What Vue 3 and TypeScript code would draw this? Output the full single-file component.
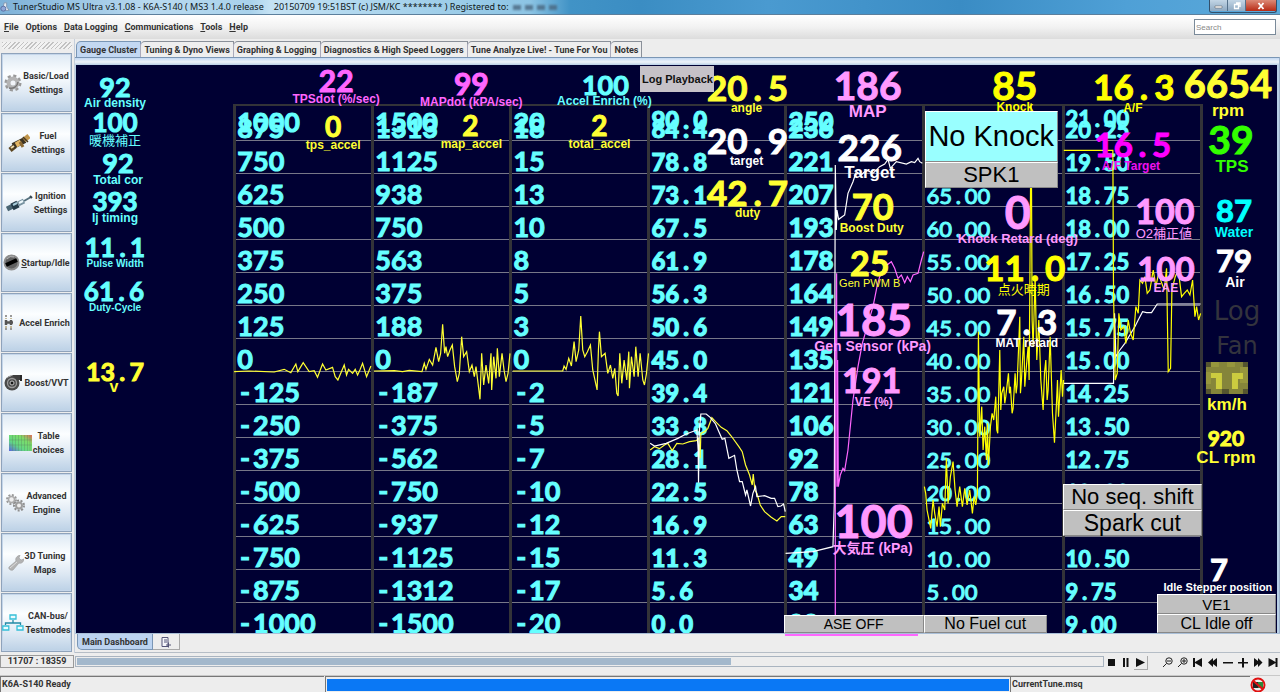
<script setup lang="ts">
import { ref } from 'vue'

interface Gauge {
  text: string
  x: number
  y: number
  size: number
  color: string
}
interface Indicator {
  text: string
  x: number
  y: number
  w: number
  h: number
  size: number
  on?: boolean
}
interface Chart {
  name: string
  kind: string
  labels: string[]
}
interface Trace {
  color: string
  x: number
  y: number
  points: string
}

/* The dashboard is designed on a 1200 x 568 canvas whose origin is (77, 65). */
const originX = 77
const originY = 65
const canvasW = 1200
const canvasH = 568
const pctX = (v: number) => ((v - originX) / canvasW) * 100 + '%'
const pctY = (v: number) => ((v - originY) / canvasH) * 100 + '%'
const place = (g: Gauge) => ({
  left: pctX(g.x),
  top: pctY(g.y),
  fontSize: g.size + 'px',
  color: g.color,
})
const placeBox = (b: Indicator) => ({
  left: pctX(b.x),
  top: pctY(b.y),
  width: (b.w / canvasW) * 100 + '%',
  height: (b.h / canvasH) * 100 + '%',
  fontSize: b.size + 'px',
})
/* Points and minus signs take a full digit cell, so they are split out. */
const parts = (s: string) => s.split(/([.-])/).filter((p) => p.length > 0)
const isMark = (p: string) => p === '.' || p === '-'

const menus = [
  { key: 'F', pre: '', rest: 'ile' },
  { key: 't', pre: 'Op', rest: 'ions' },
  { key: 'D', pre: '', rest: 'ata Logging' },
  { key: 'C', pre: '', rest: 'ommunications' },
  { key: 'T', pre: '', rest: 'ools' },
  { key: 'H', pre: '', rest: 'elp' },
]
const tabs = [
  'Gauge Cluster',
  'Tuning & Dyno Views',
  'Graphing & Logging',
  'Diagnostics & High Speed Loggers',
  'Tune Analyze Live! - Tune For You',
  'Notes',
]
const activeTab = ref(0)
const search = ref('')
const position = ref(11707)
const total = 18359

const sideItems = [
  { icon: 'gear', lines: ['Basic/Load', 'Settings'] },
  { icon: 'injector', lines: ['Fuel', 'Settings'] },
  { icon: 'plug', lines: ['Ignition', 'Settings'] },
  { icon: 'throttle', lines: ['Startup/Idle'], mnemonic: true },
  { icon: 'accel', lines: ['Accel Enrich'] },
  { icon: 'turbo', lines: ['Boost/VVT'] },
  { icon: 'table', lines: ['Table', 'choices'] },
  { icon: 'gears', lines: ['Advanced', 'Engine'] },
  { icon: 'wrench', lines: ['3D Tuning', 'Maps'] },
  { icon: 'network', lines: ['CAN-bus/', 'Testmodes'] },
]

const charts: Chart[] = [
  { name: 'tps', kind: 'wide', labels: ['1000', '875', '750', '625', '500', '375', '250', '125', '0', '-125', '-250', '-375', '-500', '-625', '-750', '-875', '-1000'] },
  { name: 'map', kind: 'wide', labels: ['1500', '1313', '1125', '938', '750', '563', '375', '188', '0', '-187', '-375', '-562', '-750', '-937', '-1125', '-1312', '-1500'] },
  { name: 'total', kind: 'wide', labels: ['20', '18', '15', '13', '10', '8', '5', '3', '0', '-2', '-5', '-7', '-10', '-12', '-15', '-17', '-20'] },
  { name: 'angle', kind: 'heavy', labels: ['90.0', '84.4', '78.8', '73.1', '67.5', '61.9', '56.3', '50.6', '45.0', '39.4', '33.8', '28.1', '22.5', '16.9', '11.3', '5.6', '0.0'] },
  { name: 'boost', kind: 'heavy large', labels: ['250', '236', '221', '207', '193', '178', '164', '149', '135', '121', '106', '92', '78', '63', '49', '34', '20'] },
  { name: 'knock', kind: 'light', labels: ['80.00', '75.00', '70.00', '65.00', '60.00', '55.00', '50.00', '45.00', '40.00', '35.00', '30.00', '25.00', '20.00', '15.00', '10.00', '5.00', '0.00'] },
  { name: 'afr', kind: 'narrow', labels: ['21.00', '20.25', '19.50', '18.75', '18.00', '17.25', '16.50', '15.75', '15.00', '14.25', '13.50', '12.75', '12.00', '11.25', '10.50', '9.75', '9.00'] },
]

const cyan = '#66ffff'
const yellow = '#ffff33'
const magenta = '#ff66ff'
const pink = '#ff99ff'
const white = '#ffffff'

const values: Gauge[] = [
  { text: '92', x: 116, y: 86, size: 27, color: cyan },
  { text: '100', x: 116, y: 122, size: 26, color: cyan },
  { text: '92', x: 119, y: 162, size: 27, color: cyan },
  { text: '393', x: 116, y: 201, size: 26, color: cyan },
  { text: '11.1', x: 116, y: 247, size: 26, color: cyan },
  { text: '61.6', x: 115, y: 291, size: 26, color: cyan },
  { text: '13.7', x: 116, y: 371, size: 25, color: yellow },
  { text: '22', x: 337, y: 80, size: 30, color: magenta },
  { text: '99', x: 472, y: 83, size: 30, color: magenta },
  { text: '100', x: 606, y: 84, size: 27, color: cyan },
  { text: '0', x: 334, y: 126, size: 28, color: yellow },
  { text: '2', x: 471, y: 125, size: 28, color: yellow },
  { text: '2', x: 600, y: 125, size: 28, color: yellow },
  { text: '20.5', x: 748, y: 87, size: 35, color: yellow },
  { text: '20.9', x: 748, y: 140, size: 35, color: white },
  { text: '42.7', x: 748, y: 192, size: 35, color: yellow },
  { text: '186', x: 868, y: 85, size: 39, color: pink },
  { text: '226', x: 870, y: 146, size: 37, color: white },
  { text: '70', x: 873, y: 206, size: 36, color: yellow },
  { text: '25', x: 870, y: 263, size: 34, color: yellow },
  { text: '185', x: 874, y: 319, size: 44, color: pink },
  { text: '191', x: 872, y: 380, size: 34, color: pink },
  { text: '100', x: 874, y: 521, size: 45, color: pink },
  { text: '85', x: 1015, y: 85, size: 39, color: '#ffff00' },
  { text: '0', x: 1018, y: 212, size: 45, color: pink },
  { text: '11.0', x: 1025, y: 267, size: 35, color: '#ffff00' },
  { text: '7.3', x: 1027, y: 321, size: 35, color: white },
  { text: '16.3', x: 1134, y: 86, size: 35, color: '#ffff00' },
  { text: '6654', x: 1228, y: 83, size: 38, color: yellow },
  { text: '16.5', x: 1133, y: 144, size: 33, color: '#ff00ff' },
  { text: '39', x: 1231, y: 139, size: 39, color: '#33ff00' },
  { text: '87', x: 1234, y: 210, size: 31, color: '#00ffff' },
  { text: '79', x: 1234, y: 260, size: 31, color: white },
  { text: '100', x: 1165, y: 211, size: 34, color: pink },
  { text: '100', x: 1166, y: 268, size: 33, color: pink },
  { text: '920', x: 1226, y: 437, size: 21, color: yellow },
  { text: '7', x: 1219, y: 569, size: 31, color: white },
]
const captions: Gauge[] = [
  { text: 'Air density', x: 116, y: 103, size: 12, color: cyan },
  { text: 'Total cor', x: 119, y: 180, size: 12, color: cyan },
  { text: 'Ij timing', x: 116, y: 218, size: 12, color: cyan },
  { text: 'Pulse Width', x: 116, y: 264, size: 10, color: cyan },
  { text: 'Duty-Cycle', x: 116, y: 308, size: 10, color: cyan },
  { text: 'v', x: 115, y: 387, size: 16, color: yellow },
  { text: 'TPSdot (%/sec)', x: 337, y: 99, size: 12, color: magenta },
  { text: 'MAPdot (kPA/sec)', x: 472, y: 102, size: 12, color: magenta },
  { text: 'Accel Enrich (%)', x: 605, y: 101, size: 12, color: cyan },
  { text: 'tps_accel', x: 334, y: 145, size: 12, color: yellow },
  { text: 'map_accel', x: 472, y: 144, size: 12, color: yellow },
  { text: 'total_accel', x: 600, y: 144, size: 12, color: yellow },
  { text: 'angle', x: 747, y: 108, size: 12, color: yellow },
  { text: 'target', x: 747, y: 161, size: 12, color: white },
  { text: 'duty', x: 748, y: 213, size: 12, color: yellow },
  { text: 'MAP', x: 868, y: 111, size: 17, color: pink },
  { text: 'Target', x: 870, y: 172, size: 17, color: white },
  { text: 'Boost Duty', x: 872, y: 228, size: 12, color: yellow },
  { text: 'Gen Sensor (kPa)', x: 873, y: 346, size: 14, color: pink },
  { text: 'VE (%)', x: 874, y: 402, size: 12, color: pink },
  { text: '大気圧 (kPa)', x: 873, y: 548, size: 14, color: pink },
  { text: 'Knock', x: 1015, y: 107, size: 12, color: '#ffff00' },
  { text: 'Knock Retard (deg)', x: 1018, y: 238, size: 13, color: pink },
  { text: 'MAT retard', x: 1027, y: 343, size: 12, color: white },
  { text: 'A/F', x: 1133, y: 108, size: 12, color: '#ffff00' },
  { text: 'rpm', x: 1228, y: 110, size: 17, color: yellow },
  { text: 'A/F Target', x: 1131, y: 166, size: 12, color: '#ee11ee' },
  { text: 'TPS', x: 1232, y: 166, size: 17, color: '#33ff00' },
  { text: 'Water', x: 1234, y: 232, size: 14, color: '#00ffff' },
  { text: 'Air', x: 1235, y: 282, size: 14, color: white },
  { text: 'EAE', x: 1166, y: 288, size: 12, color: pink },
  { text: 'km/h', x: 1227, y: 404, size: 17, color: yellow },
  { text: 'CL rpm', x: 1226, y: 457, size: 17, color: yellow },
  { text: 'Idle Stepper position', x: 1218, y: 587, size: 11, color: white },
]
const plainCaptions: Gauge[] = [
  { text: '暖機補正', x: 116, y: 140, size: 13, color: cyan },
  { text: 'Gen PWM B', x: 870, y: 283, size: 11, color: yellow },
  { text: '点火時期', x: 1024, y: 289, size: 13, color: '#ffff00' },
  { text: 'O2補正値', x: 1164, y: 233, size: 13, color: pink },
]
const dimmed: Gauge[] = [
  { text: 'Log', x: 1237, y: 311, size: 26, color: '#33333d' },
  { text: 'Fan', x: 1237, y: 346, size: 24, color: '#33333d' },
]
const indicators: Indicator[] = [
  { text: 'No Knock', x: 925, y: 111, w: 133, h: 51, size: 29, on: true },
  { text: 'SPK1', x: 925, y: 162, w: 133, h: 26, size: 22 },
  { text: 'No seq. shift', x: 1063, y: 484, w: 139, h: 26, size: 22 },
  { text: 'Spark cut', x: 1063, y: 510, w: 139, h: 26, size: 23 },
  { text: 'ASE OFF', x: 784, y: 615, w: 140, h: 18, size: 14 },
  { text: 'No Fuel cut', x: 924, y: 615, w: 123, h: 18, size: 16 },
  { text: 'VE1', x: 1157, y: 594, w: 119, h: 20, size: 15 },
  { text: 'CL Idle off', x: 1157, y: 614, w: 119, h: 19, size: 16 },
]

/* Trace points are stored at three units per canvas pixel. */
const traces: Trace[] = [
  { color: '#ffff33', x: 230, y: 90, points: '15,845 60,843 135,846 165,838 185,848 200,822 206,845 222,818 240,845 255,842 265,862 280,822 290,840 310,832 318,860 326,870 345,825 352,855 358,838 370,850 378,838 385,855 392,840 400,820 412,860 425,828' },
  { color: '#ffff33', x: 230, y: 90, points: '434,843 495,842 520,845 540,841 578,845 585,820 590,838 600,808 610,825 620,772 628,815 634,790 640,703 646,790 650,770 655,800 662,780 669,765 676,830 684,875 690,850 697,740 703,800 712,785 720,845 728,825 735,860 740,830 748,895 752,928 757,790 763,885 770,825 778,880 785,790 787,900 793,800 800,865 804,775 810,860 818,790 824,840 830,875 836,850 842,790' },
  { color: '#ffff33', x: 230, y: 90, points: '850,843 1000,843 1004,828 1010,838 1018,805 1026,828 1034,755 1040,815 1048,780 1054,678 1060,780 1066,800 1074,785 1083,765 1090,840 1103,900 1107,780 1110,725 1116,800 1127,790 1135,850 1143,825 1150,865 1156,835 1162,910 1166,918 1171,790 1177,880 1184,810 1192,870 1198,785 1200,895 1206,800 1214,860 1219,770 1226,860 1232,790 1240,870 1245,885 1251,850 1257,790' },
  { color: '#ffff33', x: 640, y: 350, points: '32,300 45,290 60,296 75,285 85,280 98,302 112,280 130,282 150,275 170,272 178,265 182,325 184,250 195,245 205,235 217,203 228,215 245,232 262,242 275,258 298,290 308,305 318,345 330,375 338,405 341,372 346,420 352,430 362,465 375,485 395,502 412,513 425,500 437,500' },
  { color: '#ffffff', x: 640, y: 350, points: '32,280 45,288 80,280 115,265 140,252 172,240 176,300 177,398 179,250 184,192 200,192 212,202 228,222 240,250 248,268 256,265 268,325 285,316 292,360 300,395 308,395 318,435 322,420 333,468 340,430 348,410 352,440 375,437 395,445 405,445 415,470 424,468 432,462 437,485' },
  { color: '#ffffff', x: 640, y: 60, points: '438,1480 520,1475 580,1460 584,1330 587,315 590,510 592,450 597,478 615,465 625,400 640,365 650,335 665,345 680,330 700,340 720,320 735,312 745,298 752,325 770,305 800,312 815,305 825,308 835,295 840,305 848,310' },
  { color: '#ff66ff', x: 640, y: 60, points: '587,1665 587,870 591,640 592,1280 594,900 596,1280 602,1245 610,1225 615,1232 625,1170 640,1020 655,920 668,850 700,740 712,680 720,650 735,620 755,605 765,625 775,655 785,645 795,668 803,650 812,665 820,645 835,640 845,600 852,575' },
  { color: '#ffff00', x: 920, y: 60, points: '14,1280 18,1300 22,1350 33,1405 40,1320 45,1360 52,1400 58,1340 62,1400 68,1330 75,1350 80,1195 85,1330 92,1250 100,1205 106,1290 112,1340 120,1280 128,1340 135,1285 142,1335 150,1290 158,1360 163,1310 168,1335 173,1300 176,815 180,1130 186,1040 190,1170 195,1100 200,1200 203,1090 206,1215 212,1100 217,1060 222,1080 228,1010 231,1110 234,1120 240,870 243,1050 246,1000 252,980 255,1030 258,1010 266,940 269,1000 272,980 277,1060 280,1045 286,940 289,1000 292,975 300,770 302,1000 305,960 312,830 315,980 318,940 325,860 328,960 330,700 334,130 337,780 340,860 346,650 351,900 357,780 363,960 370,1050 374,940 378,900 382,1020 385,990 391,830 398,1060 404,1148 410,1030 413,960 416,1070 424,930 428,1010 431,960' },
  { color: '#ffffff', x: 920, y: 60, points: '432,970 581,970 584,760 588,890 600,870 615,850 630,825 645,800 655,780 668,755 680,758 695,758 712,732 842,732' },
  { color: '#ffff00', x: 920, y: 60, points: '432,271 579,271 581,700 586,960 592,940 597,760 603,810 612,800 618,850 625,780 632,820 640,840 648,740 655,760 660,660 668,670 675,650 682,700 690,690 700,630 708,680 716,640 724,665 733,690 740,625 745,935 752,925 756,690 766,650 775,630 785,710 793,700 802,690 810,705 818,660 825,770 830,740 836,780 842,760' },
]
</script>

<template>
  <div class="window">
    <header class="titlebar">
      <svg class="app-icon" viewBox="0 0 12 12" aria-hidden="true">
        <path d="M5 1h3v5l3 4H3z" fill="#e8eef5" stroke="#7d8ea6" />
        <circle cx="4" cy="8" r="3" fill="#8fa7d8" stroke="#56679a" />
      </svg>
      <span class="title">TunerStudio MS Ultra v3.1.08 - K6A-S140 ( MS3 1.4.0 release</span>
      <span class="title build">20150709 19:51BST (c) JSM/KC ******** ) Registered to:</span>
      <span class="redacted" aria-hidden="true"><i></i><i></i><i></i><i></i></span>
      <div class="win-buttons">
        <button type="button" aria-label="Minimize"><svg viewBox="0 0 12 10"><path d="M2 5h7v2H2z" fill="#fff" stroke="#555" stroke-width=".5" /></svg></button>
        <button type="button" aria-label="Restore"><svg viewBox="0 0 12 10"><path d="M3.500 3.500h4v4h-4zM5 2h4v4" fill="none" stroke="#fff" stroke-width="1.300" /></svg></button>
        <button type="button" class="close" aria-label="Close"><svg viewBox="0 0 12 10"><path d="M3.500 2l5 6M8.500 2l-5 6" stroke="#fff" stroke-width="1.800" /></svg></button>
      </div>
    </header>

    <nav class="menubar">
      <button v-for="m in menus" :key="m.key" type="button">{{ m.pre }}<u>{{ m.key }}</u>{{ m.rest }}</button>
      <input v-model="search" class="search" type="text" placeholder="Search" aria-label="Search" />
    </nav>

    <div class="body">
      <aside class="sidebar">
        <div class="grip"></div>
        <button v-for="item in sideItems" :key="item.icon" type="button" class="side-btn">
          <svg v-if="item.icon === 'gear'" class="ico" width="18" height="18" viewBox="0 0 18 18">
            <circle cx="9" cy="9" r="7" fill="none" stroke="#999" stroke-width="3" stroke-dasharray="3 2.500" />
            <circle cx="9" cy="9" r="4.500" fill="none" stroke="#b4b4b4" stroke-width="4" />
            <path d="M5 14a7 7 0 0 0 9-6" fill="none" stroke="#777" stroke-width="1.500" />
            <circle cx="9" cy="9" r="2" fill="#f3f5f8" />
          </svg>
          <svg v-else-if="item.icon === 'injector'" class="ico" width="22" height="18" viewBox="0 0 22 18">
            <path d="M2 16l5-4" stroke="#5b4520" stroke-width="5" />
            <path d="M5 12l12-6" stroke="#3d3423" stroke-width="6" />
            <path d="M8 11l5-3" stroke="#e2b565" stroke-width="5" />
            <path d="M12 8l3 5" stroke="#8b6a34" stroke-width="3" />
            <path d="M16 6l5-4" stroke="#c0954b" stroke-width="5" />
            <path d="M15 3l5 5" stroke="#443822" stroke-width="1.500" />
            <path d="M3 14l3-2" stroke="#f0dcae" stroke-width="2" />
          </svg>
          <svg v-else-if="item.icon === 'plug'" class="ico" width="27" height="18" viewBox="0 0 27 18">
            <path d="M1 15l6-3" stroke="#4b6573" stroke-width="5" />
            <path d="M6 13l6-3" stroke="#243b49" stroke-width="7" />
            <path d="M7 11l4-2" stroke="#a8ccda" stroke-width="2" />
            <path d="M12 10l6-3" stroke="#7893a1" stroke-width="5" />
            <path d="M13 9l4-2" stroke="#eef8fc" stroke-width="2" />
            <path d="M18 7l7-4" stroke="#55707e" stroke-width="2" />
            <path d="M24 2l2 2" stroke="#35454f" stroke-width="2" />
          </svg>
          <svg v-else-if="item.icon === 'throttle'" class="ico" width="17" height="17" viewBox="0 0 17 17">
            <circle cx="8.500" cy="8.500" r="7" fill="#606060" stroke="#8d8d8d" stroke-width="2" />
            <path d="M3 11l11-5" stroke="#000" stroke-width="4" />
            <path d="M4 5a6 6 0 0 1 7-2" stroke="#b8b8b8" fill="none" />
          </svg>
          <svg v-else-if="item.icon === 'accel'" class="ico accel" width="12" height="16" viewBox="0 0 12 16">
            <path d="M2 1h2M7 1h2M2 14h2M7 14h2" stroke="#999" stroke-width="2" />
            <path d="M3 5v5M8 5v5M2 7.500h8" stroke="#555" stroke-width="2.500" />
            <path d="M3 11v2M8 11v2M3 3v1M8 3v1" stroke="#b7a67a" stroke-width="1.500" />
          </svg>
          <svg v-else-if="item.icon === 'turbo'" class="ico" width="19" height="18" viewBox="0 0 19 18">
            <circle cx="8" cy="9" r="7.500" fill="#4b4b4b" />
            <path d="M8 1h10v5h-5z" fill="#3f3f3f" />
            <path d="M16 1h2v6h-2z" fill="#2a2a2a" />
            <circle cx="8" cy="9" r="4.500" fill="none" stroke="#999" stroke-width="1.300" />
            <circle cx="8" cy="9" r="2" fill="#151515" stroke="#c4c4c4" />
            <path d="M3 4a7 7 0 0 1 4-2" stroke="#a5a5a5" fill="none" />
          </svg>
          <svg v-else-if="item.icon === 'table'" class="ico" width="23" height="16" viewBox="0 0 23 16">
            <defs>
              <linearGradient id="heat" x1="0" y1="1" x2="1" y2="0">
                <stop offset="0" stop-color="#5a64e0" />
                <stop offset=".35" stop-color="#62d884" />
                <stop offset=".7" stop-color="#7ddc68" />
                <stop offset="1" stop-color="#e86a5a" />
              </linearGradient>
            </defs>
            <path d="M0 0h23v16H0z" fill="url(#heat)" />
            <path d="M3.500 0v16M6.500 0v16M9.500 0v16M12.500 0v16M15.500 0v16M18.500 0v16M21 0v16M0 5h23M0 10h23" stroke="#5b8a62" stroke-opacity=".45" stroke-width=".8" />
          </svg>
          <svg v-else-if="item.icon === 'gears'" class="ico" width="19" height="18" viewBox="0 0 19 18">
            <circle cx="5.500" cy="5.500" r="4.500" fill="none" stroke="#999" stroke-width="2" stroke-dasharray="2 1.500" />
            <circle cx="5.500" cy="5.500" r="3" fill="#eee" stroke="#aaa" stroke-width="1.500" />
            <circle cx="13" cy="11.500" r="5" fill="none" stroke="#8e8e8e" stroke-width="2" stroke-dasharray="2 1.500" />
            <circle cx="13" cy="11.500" r="3" fill="#eee" stroke="#9e9e9e" stroke-width="2" />
          </svg>
          <svg v-else-if="item.icon === 'wrench'" class="ico" width="16" height="16" viewBox="0 0 16 16">
            <path d="M1 12l7-6c-1-3 1-5 4-6l-1 3 2 2 3-1c0 3-3 5-5 4l-6 7c-2 1-5-1-4-3z" fill="#b3b3b3" stroke="#9a9a9a" stroke-width=".6" />
            <path d="M2 13l7-6" stroke="#ddd" />
          </svg>
          <svg v-else class="ico" width="22" height="18" viewBox="0 0 22 18">
            <path d="M11 6v3M3.500 11V9h15v2" fill="none" stroke="#238aa6" stroke-width="1.300" />
            <path d="M8 1h6v4H8zM.8 12h6v4h-6zM15 12h6v4h-6z" fill="#eafcff" stroke="#35bfd8" stroke-width="1.300" />
          </svg>
          <span class="side-text">
            <span v-for="(line, i) in item.lines" :key="line">
              <template v-if="item.mnemonic && i === 0"><u>{{ line.charAt(0) }}</u>{{ line.slice(1) }}</template>
              <template v-else>{{ line }}</template>
            </span>
          </span>
        </button>
      </aside>

      <main class="content">
        <div class="tabs" role="tablist">
          <button
            v-for="(t, i) in tabs"
            :key="t"
            type="button"
            role="tab"
            :aria-selected="i === activeTab"
            :class="{ active: i === activeTab }"
            @click="activeTab = i"
          >{{ t }}</button>
        </div>

        <div class="frame">
          <section class="dash">
            <div class="charts">
              <div v-for="c in charts" :key="c.name" class="chart" :class="c.kind">
                <div v-for="(l, i) in c.labels" :key="i" class="row" :class="{ first: i === 0 }">
                  <span class="num"><template v-for="(p, k) in parts(l)" :key="k"><span v-if="isMark(p)" class="mark">{{ p }}</span><template v-else>{{ p }}</template></template></span>
                </div>
              </div>
            </div>

            <svg class="traces" :viewBox="`${originX} ${originY} ${canvasW} ${canvasH}`" preserveAspectRatio="none" aria-hidden="true">
              <g v-for="(t, i) in traces" :key="i" :transform="`translate(${t.x} ${t.y}) scale(.33333)`">
                <polyline :points="t.points" fill="none" :stroke="t.color" stroke-width="1.200" vector-effect="non-scaling-stroke" />
              </g>
              <g>
                <rect x="1206" y="362" width="42" height="32" fill="#85853a" />
                <path d="M1211 362h8v5h-8zM1227 362h8v5h-8zM1240 367h8v16h-8zM1206 372h5v12h-5z" fill="#96963d" />
                <path d="M1211 373h11v16h-6v-11h-5zM1232 373h11v6h-5v10h-6z" fill="#cccc3f" />
                <path d="M1206 362h5v5h-5zM1243 362h5v5h-5zM1206 389h5v5h-5zM1243 389h5v5h-5zM1222 389h7v5h-7z" fill="#55552f" />
              </g>
            </svg>

            <span v-for="(g, i) in captions" :key="'c' + i" class="at caption" :style="place(g)">{{ g.text }}</span>
            <span v-for="(g, i) in plainCaptions" :key="'p' + i" class="at plain" :style="place(g)">{{ g.text }}</span>
            <span v-for="(g, i) in dimmed" :key="'d' + i" class="at dim" :style="place(g)">{{ g.text }}</span>
            <span v-for="(g, i) in values" :key="'v' + i" class="at num" :style="place(g)"><template v-for="(p, k) in parts(g.text)" :key="k"><span v-if="isMark(p)" class="mark">{{ p }}</span><template v-else>{{ p }}</template></template></span>

            <div v-for="b in indicators" :key="b.text" class="indicator" :class="{ on: b.on }" :style="placeBox(b)">{{ b.text }}</div>
            <button type="button" class="playback-btn">Log Playback</button>
          </section>
          <div class="marker"></div>
        </div>

        <div class="dash-tabs">
          <button type="button" class="main-tab">Main Dashboard</button>
          <button type="button" class="add-tab" aria-label="New dashboard">
            <svg width="10" height="11" viewBox="0 0 10 11"><path d="M1 .5h6v9H1z" fill="#f6f6fa" stroke="#555577" /><path d="M3 3h3M3 5h3M5 8h5M7.500 5.500v5" stroke="#555577" /></svg>
          </button>
        </div>
      </main>
    </div>

    <div class="player">
      <output class="counter">{{ position }} : {{ total }}</output>
      <input
        v-model.number="position"
        class="seek"
        type="range"
        min="0"
        :max="total"
        aria-label="Log position"
        :style="{ '--fill': (position / total) * 100 + '%' }"
      />
      <div class="controls">
        <button type="button" aria-label="Stop"><svg viewBox="0 0 12 12"><path d="M2 3h7v7H2z" /></svg></button>
        <button type="button" aria-label="Pause"><svg viewBox="0 0 12 12"><path d="M3 2h2v9H3zM6.500 2h2v9h-2z" /></svg></button>
        <button type="button" class="pressed" aria-label="Play"><svg viewBox="0 0 12 12"><path d="M2 2l9 4.500L2 11z" /></svg></button>
      </div>
      <div class="controls nav">
        <button type="button" aria-label="Zoom out"><svg viewBox="0 0 12 12"><circle cx="7" cy="5" r="3.200" fill="none" stroke="#222" /><path d="M5 5h4M4.500 7.500L1 11" stroke="#222" /></svg></button>
        <button type="button" aria-label="Zoom in"><svg viewBox="0 0 12 12"><circle cx="7" cy="5" r="3.200" fill="none" stroke="#222" /><path d="M5 5h4M7 3v4M4.500 7.500L1 11" stroke="#222" /></svg></button>
        <button type="button" aria-label="First"><svg viewBox="0 0 12 12"><path d="M1 2h2v4l7-4v9L3 7v4H1z" /></svg></button>
        <button type="button" aria-label="Back"><svg viewBox="0 0 12 12"><path d="M1 6.500L6 2v3l4-3v9L6 8v3z" /></svg></button>
        <button type="button" aria-label="Slower"><svg viewBox="0 0 12 12"><path d="M1 6h10v1.500H1z" /></svg></button>
        <button type="button" aria-label="Faster"><svg viewBox="0 0 12 12"><path d="M1 6h4V2h2v4h4v1.500H7v4H5v-4H1z" /></svg></button>
        <button type="button" aria-label="Forward"><svg viewBox="0 0 12 12"><path d="M10.500 6.500L6 2v3L2 2v9l4-3v3z" /></svg></button>
        <button type="button" aria-label="Last"><svg viewBox="0 0 12 12"><path d="M10.500 2h-2v4l-7-4v9l7-4v4h2z" /></svg></button>
      </div>
    </div>

    <footer class="status">
      <span class="cell state">K6A-S140 Ready</span>
      <div class="cell bar" role="progressbar" aria-label="Progress" aria-valuenow="100"><div></div></div>
      <span class="cell tune">CurrentTune.msq</span>
      <svg class="offline" width="16" height="16" viewBox="0 0 16 16" aria-label="Offline">
        <path d="M3 5h5v6H3z" fill="#222" />
        <path d="M8 5h5v6H8z" fill="#2b8a3a" />
        <circle cx="8" cy="8" r="6.500" fill="none" stroke="#e01010" stroke-width="2" />
        <path d="M3.500 4l9 8" stroke="#e01010" stroke-width="2" />
      </svg>
    </footer>
  </div>
</template>

<style>
body {
  margin: 0;
  background: #ededed;
}
</style>

<style scoped>
.window {
  min-height: 100vh;
  display: flex;
  flex-direction: column;
  background: #ededed;
  color: #333;
  font-family: Roboto, "Liberation Sans", "Noto Sans CJK JP", sans-serif;
  font-size: 9px;
  font-weight: bold;
  line-height: 12px;
}
button {
  font: inherit;
  color: inherit;
  margin: 0;
  padding: 0;
  border: 0;
  background: none;
  white-space: nowrap;
}
.titlebar {
  height: 14px;
  display: flex;
  align-items: center;
  background: linear-gradient(90deg, #7db1d8 0, #b9daf0 150px, #a9d2ec 250px, #c4e2f4 270px, #8cc4e4 530px, #4193c6 570px, #3b8dc3 50%, #4a9ad0 60%, #3a8cc4 75%, #4fa0d6 88%, #5ba9da 100%);
  border-bottom: 1px solid #5c7f9c;
}
.app-icon {
  width: 10px;
  height: 12px;
  margin-right: 3px;
}
.title {
  font-family: "Noto Sans", sans-serif;
  font-weight: normal;
  font-size: 9px;
  color: #101820;
  white-space: nowrap;
}
.build {
  margin-left: 10px;
}
.redacted {
  display: flex;
  gap: 4px;
  margin-left: 4px;
  filter: blur(1px);
}
.redacted i {
  width: 8px;
  height: 5px;
  background: #4a6680;
  opacity: 0.8;
}
.win-buttons {
  margin-left: auto;
  margin-right: 3px;
  align-self: flex-start;
  display: flex;
  height: 12px;
  border: 1px solid #33506b;
  border-top: 0;
  border-radius: 0 0 3px 3px;
  overflow: hidden;
}
.win-buttons button {
  width: 18px;
  height: 11px;
  background: linear-gradient(#c3d6e6, #8ea9c2);
  border-right: 1px solid #54708a;
}
.win-buttons .close {
  width: 30px;
  border: 0;
  background: linear-gradient(#dc8a77, #b82a14);
}
.win-buttons svg {
  display: block;
  width: 12px;
  height: 10px;
  margin: 0 auto;
}
.menubar {
  height: 24px;
  display: flex;
  align-items: center;
  gap: 7px;
  padding: 0 4px 0 4px;
  background: linear-gradient(#fff, #f2f2f2 50%, #dcdcdc);
}
.search {
  box-sizing: border-box;
  width: 82px;
  height: 16px;
  margin-left: auto;
  padding: 0 1px;
  border: 1px solid #7a8a99;
  background: #fff;
  font: 8px "Liberation Sans", sans-serif;
}
.search::placeholder {
  color: #888;
}
.body {
  flex: 1;
  display: flex;
}
.sidebar {
  width: 75px;
  flex: none;
  box-sizing: border-box;
  padding: 3px 2px 0 1px;
  display: flex;
  flex-direction: column;
  border-right: 1px solid #c5cfdc;
}
.grip {
  height: 7px;
  margin: 0 0 4px 1px;
  background: repeating-linear-gradient(135deg, #c2c2c2 0 1px, #f2f2f2 1px 3px);
}
.side-btn {
  flex: 1;
  min-height: 50px;
  box-sizing: border-box;
  margin-bottom: 1px;
  display: flex;
  align-items: center;
  justify-content: center;
  gap: 1px;
  border: 1px solid #8fa3bb;
  box-shadow: inset 0 0 0 1px #c5d6ea;
  background: linear-gradient(#dde9f4 0, #fcfeff 35%, #dde8f3 70%, #bcd1e6 100%);
  line-height: 14px;
}
.ico {
  flex: none;
}
.accel {
  margin: 0 3px 0 0;
}
.side-text {
  display: flex;
  flex-direction: column;
  text-align: center;
}
.content {
  flex: 1;
  min-width: 0;
  display: flex;
  flex-direction: column;
}
.tabs {
  display: flex;
  padding: 2px 0 0 1px;
  height: 16px;
}
.tabs button {
  height: 17px;
  padding: 0 3px;
  background: #eee;
  border: 1px solid #8a9099;
  border-left-color: #aab;
  border-bottom: 0;
  margin-right: -1px;
  border-top-left-radius: 5px;
}
.tabs button.active {
  background: #c3d8f2;
  border-color: #7a96b5;
}
.frame {
  position: relative;
  flex: 1;
  display: flex;
  flex-direction: column;
  padding: 7px 2px 0 1px;
  border-top: 1px solid #7a96b5;
  background: linear-gradient(#c3d8f2 0, #eef3f9 4px, #b8cfe6 7px);
  border-right: 1px solid #9db3cb;
}
.dash {
  position: relative;
  flex: 1;
  min-height: 568px;
  overflow: hidden;
  background: #000033;
}
/* The strip charts run on just past the bottom of the canvas. */
.charts {
  position: absolute;
  top: 6.8%;
  bottom: -0.5%;
  left: 13.1%;
  right: 6.2%;
  display: grid;
  grid-template-columns: 138fr 138fr 138fr 137fr 138fr 139fr 141fr;
}
.chart {
  display: grid;
  grid-template-rows: 2px repeat(16, 1fr);
  min-width: 0;
  border-left: 3px solid #333338;
  border-top: 2px solid #333338;
  font-size: 27px;
}
.chart:last-child {
  border-right: 3px solid #333338;
}
.row {
  display: flex;
  align-items: flex-end;
  min-height: 0;
  border-bottom: 1px solid #777788;
  line-height: 1;
}
.row .num {
  height: 1em;
  margin-bottom: -1px;
  padding-left: 1px;
}
.row.first {
  border: 0;
  align-items: flex-start;
}
.row.first .num {
  margin-top: 2px;
}
.heavy {
  font-size: 24px;
}
.large {
  font-size: 26px;
}
.light,
.narrow {
  font-size: 22px;
}
.num {
  font-family: Lato, "Noto Sans", sans-serif;
  font-weight: bold;
  font-variant-numeric: tabular-nums;
  line-height: 1;
  white-space: nowrap;
  color: #66ffff;
  -webkit-text-stroke: 1px currentColor;
}
.heavy .num {
  font-weight: 900;
}
.light .num {
  font-weight: 500;
}
.mark {
  display: inline-block;
  width: 0.58em;
  text-align: center;
}
.traces {
  position: absolute;
  inset: 0;
  width: 100%;
  height: 100%;
}
.at {
  position: absolute;
  transform: translate(-50%, -50%);
  line-height: 1;
  white-space: nowrap;
}
.caption,
.plain {
  font-family: "Liberation Sans", "Noto Sans CJK JP", sans-serif;
}
.plain {
  font-weight: normal;
}
.dim {
  font-family: "DejaVu Sans", sans-serif;
  font-weight: normal;
}
.indicator {
  position: absolute;
  box-sizing: border-box;
  display: flex;
  align-items: center;
  justify-content: center;
  border-top: 1px solid #fff;
  border-left: 1px solid #fff;
  border-bottom: 1px solid #888;
  border-right: 1px solid #888;
  background: #c0c0c0;
  color: #000;
  font-family: "Liberation Sans", sans-serif;
  font-weight: normal;
  line-height: 1;
  white-space: nowrap;
}
.indicator.on {
  background: #99ffff;
}
.playback-btn {
  position: absolute;
  left: 47%;
  top: 1px;
  width: 74px;
  height: 26px;
  background: #c6c2c8;
  color: #111;
  font-family: "Liberation Sans", sans-serif;
  font-size: 11px;
}
.marker {
  position: absolute;
  left: 59%;
  width: 11%;
  bottom: -3px;
  height: 2px;
  background: #ff66ff;
}
.dash-tabs {
  display: flex;
  height: 18px;
  padding-left: 2px;
  border-top: 1px solid #a9bfd8;
  border-bottom: 1px solid #b5bdc6;
}
.main-tab {
  height: 16px;
  padding: 0 4px;
  border: 1px solid #7a96b5;
  border-top: 0;
  background: #bcd3f0;
  border-bottom-left-radius: 5px;
}
.add-tab {
  width: 27px;
  height: 16px;
  border: 1px solid #a8a8a8;
  border-top: 0;
  border-left: 0;
}
.add-tab svg {
  display: block;
  margin: 1px auto 0;
}
.player {
  display: flex;
  align-items: center;
  height: 17px;
  padding-bottom: 5px;
}
.counter {
  box-sizing: border-box;
  width: 74px;
  height: 13px;
  margin-right: 1px;
  border: 1px solid #9a9a9a;
  text-align: center;
  line-height: 11px;
}
.seek {
  appearance: none;
  flex: 1;
  min-width: 0;
  height: 11px;
  margin: 0;
  box-sizing: border-box;
  border: 1px solid #a9b4c0;
  padding: 1px;
  background: linear-gradient(90deg, #a3b8cc var(--fill), #ededed var(--fill)) content-box;
}
.seek::-webkit-slider-thumb {
  appearance: none;
  width: 1px;
  height: 8px;
}
.controls {
  display: flex;
  margin-left: 1px;
}
.controls button {
  width: 14px;
  height: 14px;
}
.controls .pressed {
  box-shadow: 1px 1px 0 #aaa;
}
.controls svg {
  display: block;
  width: 12px;
  height: 12px;
  margin: 0 auto;
  fill: #111;
}
.nav {
  margin-left: 14px;
  gap: 1px;
}
.status {
  display: flex;
  height: 18px;
  border-top: 1px solid #c8c8c8;
}
.cell {
  box-sizing: border-box;
  border-left: 1px solid #777;
  border-top: 1px solid #777;
  padding-left: 1px;
  line-height: 15px;
}
.state {
  width: 324px;
}
.bar {
  flex: 1;
  margin-left: 1px;
  padding: 2px 1px;
}
.bar div {
  height: 12px;
  background: #0a78f5;
}
.tune {
  width: 240px;
}
.offline {
  margin: 1px 14px 0 0;
}
</style>
